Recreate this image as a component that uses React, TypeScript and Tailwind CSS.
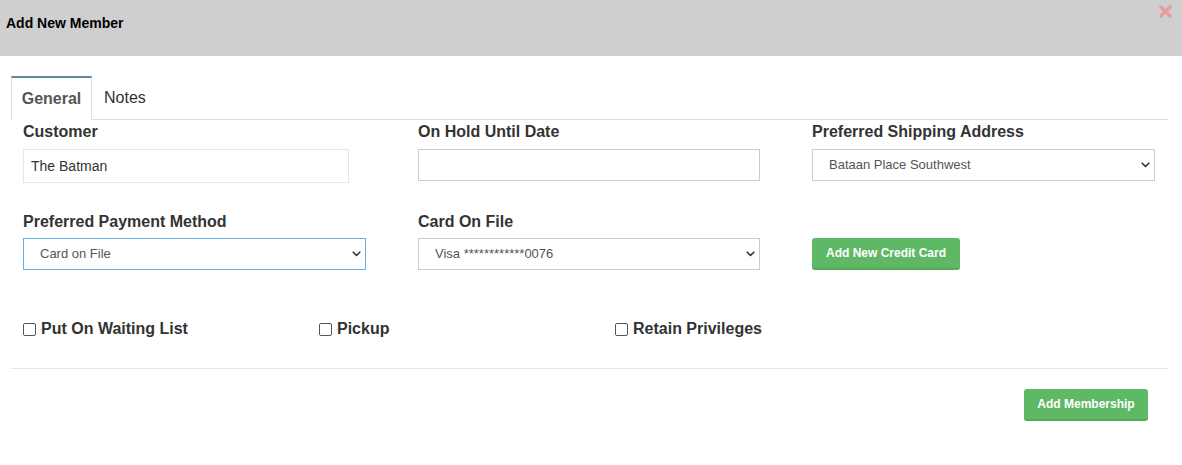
import React from "react";

const font = { fontFamily: '"Liberation Sans", Arial, sans-serif' };

function Chevron() {
  return (
    <svg className="pointer-events-none absolute right-[5px] top-1/2 -translate-y-1/2" width="9" height="6" viewBox="0 0 9 6">
      <path d="M1.2 1.2 L4.5 4.5 L7.8 1.2" fill="none" stroke="#333" strokeWidth="1.6" strokeLinecap="round" strokeLinejoin="round" />
    </svg>
  );
}

function Select({ value, focused }: { value: string; focused?: boolean }) {
  return (
    <div className="relative w-full">
      <select
        defaultValue={value}
        className={`h-[32px] w-full appearance-none rounded-none bg-white pl-[16px] pr-8 text-[13px] text-[#555] outline-none ${
          focused ? "border border-[#66afe9]" : "border border-[#ccc]"
        }`}
        style={font}
      >
        <option>{value}</option>
      </select>
      <Chevron />
    </div>
  );
}

function Label({ children }: { children: React.ReactNode }) {
  return <div className="text-[16px] font-bold leading-[18px] text-[#333]">{children}</div>;
}

function Check({ label }: { label: string }) {
  return (
    <label className="flex items-center gap-[5px] text-[16px] font-bold text-[#333]">
      <span className="inline-block h-[13px] w-[13px] rounded-[2px] border border-[#555] bg-white" />
      {label}
    </label>
  );
}

export default function App() {
  return (
    <div className="h-[465px] w-[1182px] bg-white" style={font}>
      <div className="flex h-[56px] items-start justify-between bg-[#cfcfcf]">
        <div className="pl-[6px] pt-[15px] text-[14px] font-bold leading-[16px] text-black">Add New Member</div>
        <svg className="mr-[10px] mt-[5px]" width="13" height="13" viewBox="0 0 13 13">
          <path d="M2 2 L11 11 M11 2 L2 11" stroke="#e89b9b" strokeWidth="3.4" strokeLinecap="round" />
        </svg>
      </div>

      <div className="ml-[11px] mr-[14px] mt-[20px]">
        <div className="flex h-[44px] border-b border-[#ddd]">
          <div className="-mb-px flex w-[81px] items-center justify-center border-x border-t-2 border-x-[#ddd] border-t-[#5a8a9b] bg-white text-[16px] font-bold text-[#555]">
            General
          </div>
          <div className="flex items-center pl-[12px] text-[16px] text-[#333]">Notes</div>
        </div>

        <div className="grid grid-cols-[343px_342px_343px] gap-x-[52px] pl-[12px] pt-[3px]">
          <div>
            <Label>Customer</Label>
            <input
              defaultValue="The Batman"
              className="mt-[8px] h-[34px] w-[326px] border border-[#e6e6e6] px-[7px] text-[14px] text-[#333] outline-none"
              style={font}
            />
          </div>
          <div>
            <Label>On Hold Until Date</Label>
            <input className="mt-[8px] h-[32px] w-full border border-[#ccc] px-[7px] text-[14px] outline-none" style={font} />
          </div>
          <div>
            <Label>Preferred Shipping Address</Label>
            <div className="mt-[8px]">
              <Select value="Bataan Place Southwest" />
            </div>
          </div>

          <div className="pt-[30px]">
            <Label>Preferred Payment Method</Label>
            <div className="mt-[7px]">
              <Select value="Card on File" focused />
            </div>
          </div>
          <div className="pt-[30px]">
            <Label>Card On File</Label>
            <div className="mt-[7px]">
              <Select value="Visa ************0076" />
            </div>
          </div>
          <div className="pt-[55px]">
            <button className="h-[32px] rounded-[3px] border-b-2 border-[#55a955] bg-[#5fb866] px-[14px] text-[12px] font-bold text-white" style={font}>
              Add New Credit Card
            </button>
          </div>
        </div>

        <div className="grid grid-cols-[296px_296px_296px] pl-[12px] pt-[47px]">
          <Check label="Put On Waiting List" />
          <Check label="Pickup" />
          <Check label="Retain Privileges" />
        </div>

        <div className="mt-[27px] border-t border-[#e5e5e5]" />

        <div className="flex justify-end pr-[20px] pt-[20px]">
          <button className="h-[32px] w-[124px] rounded-[3px] border-b-2 border-[#55a955] bg-[#5fb866] text-[12px] font-bold text-white" style={font}>
            Add Membership
          </button>
        </div>
      </div>
    </div>
  );
}
